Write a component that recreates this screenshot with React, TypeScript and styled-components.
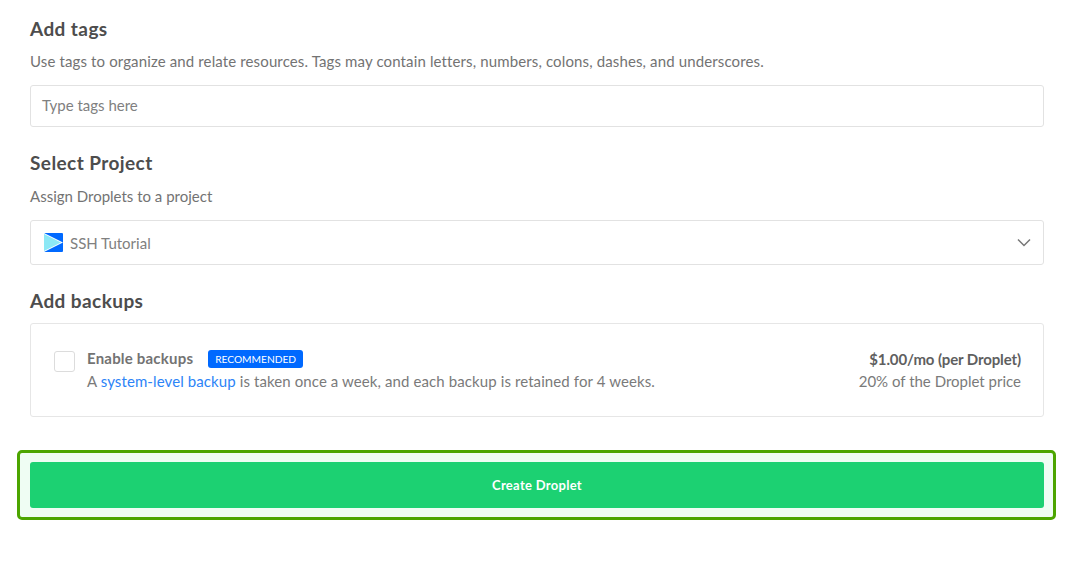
import styled, { createGlobalStyle } from "styled-components";

const GlobalStyle = createGlobalStyle`
  html, body {
    margin: 0;
    padding: 0;
    background: #fff;
    font-family: "Lato", "Liberation Sans", sans-serif;
  }
`;

const Page = styled.div`
  width: 1080px;
  height: 564px;
  overflow: hidden;
  box-sizing: border-box;
  padding: 17px 36px 0 30px;
`;

const Title = styled.h2`
  margin: 0;
  font-size: 19px;
  line-height: 24px;
  font-weight: 700;
  letter-spacing: 0.42px;
  color: #4d4d4d;
`;

const Hint = styled.p`
  margin: 10px 0 0;
  font-size: 15px;
  line-height: 20px;
  letter-spacing: 0.13px;
  color: #737373;
`;

const ProjectHint = styled(Hint)`
  margin-top: 11px;
  letter-spacing: 0;
`;

const Field = styled.div<{ $height: number }>`
  box-sizing: border-box;
  height: ${(p) => p.$height}px;
  margin: 14px 0 24px;
  padding: 0 12px 0 13px;
  display: flex;
  align-items: center;
  gap: 7px;
  border: 1px solid #e2e2e2;
  border-radius: 3px;
  font-size: 15px;
  color: #808080;
`;

const TagsField = styled(Field)`
  padding: 0 12px 2px 11px;
`;

const Grow = styled.span`
  flex: 1;
`;

const BackupCard = styled.div`
  box-sizing: border-box;
  height: 94px;
  margin-top: 10px;
  padding: 0 22px 0 23px;
  display: flex;
  align-items: center;
  border: 1px solid #e6e6e6;
  border-radius: 3px;
`;

const Check = styled.div`
  box-sizing: border-box;
  align-self: flex-start;
  width: 21px;
  height: 21px;
  margin: 27px 12px 0 0;
  border: 1px solid #dcdcdc;
  border-radius: 3px;
`;

const Info = styled.div`
  flex: 1;
`;

const Row = styled.div`
  display: flex;
  align-items: center;
  height: 22px;
  margin: -1px 0 1px;
  font-size: 15px;
  color: #737373;
`;

const Strong = styled.span`
  font-weight: 700;
  letter-spacing: 0.2px;
`;

const Badge = styled.span`
  margin: 2px 0 0 15px;
  padding: 0 7px;
  height: 18px;
  line-height: 18px;
  border-radius: 3px;
  background: #0069ff;
  color: #fff;
  font-size: 10.2px;
`;

const Line = styled.div`
  font-size: 15px;
  line-height: 22px;
  letter-spacing: 0.1px;
  color: #7a7a7a;
`;

const Anchor = styled.a`
  color: #2c84f7;
`;

const Price = styled.div`
  text-align: right;
  font-size: 15px;
  line-height: 22px;
  color: #7a7a7a;
`;

const Amount = styled.div`
  font-weight: 700;
  letter-spacing: -0.12px;
  color: #5f5f5f;
`;

const Highlight = styled.div`
  box-sizing: border-box;
  width: 1039px;
  height: 70px;
  margin: 33px 0 0 -13px;
  padding: 9px 10px;
  border: 3px solid #4ca500;
  border-radius: 5px;
  background: #effdf3;
`;

const CreateButton = styled.button`
  display: block;
  width: 1014px;
  height: 46px;
  border: 0;
  border-radius: 3px;
  background: #1cd172;
  color: #fff;
  font-family: inherit;
  font-size: 13px;
  font-weight: 700;
  letter-spacing: 0.3px;
`;

const ProjectIcon = () => (
  <svg width="19" height="19" viewBox="0 0 19 19">
    <rect width="19" height="19" rx="1" fill="#0069ff" />
    <path d="M0 0 L19 9.5 L0 19 Z" fill="#fff" />
    <path d="M0 1 L17 9.5 L0 18 Z" fill="#8ce8f5" />
  </svg>
);

const Chevron = () => (
  <svg width="14" height="9" viewBox="0 0 14 9" fill="none" stroke="#777" strokeWidth="1.5">
    <path d="M1 1.5 L7 7.5 L13 1.5" />
  </svg>
);

export default function App() {
  return (
    <Page>
      <GlobalStyle />
      <Title>Add tags</Title>
      <Hint>Use tags to organize and relate resources. Tags may contain letters, numbers, colons, dashes, and underscores.</Hint>
      <TagsField $height={42}>Type tags here</TagsField>

      <Title>Select Project</Title>
      <ProjectHint>Assign Droplets to a project</ProjectHint>
      <Field $height={45}>
        <ProjectIcon />
        <Grow>SSH Tutorial</Grow>
        <Chevron />
      </Field>

      <Title>Add backups</Title>
      <BackupCard>
        <Check />
        <Info>
          <Row>
            <Strong>Enable backups</Strong>
            <Badge>RECOMMENDED</Badge>
          </Row>
          <Line>
            A <Anchor>system-level backup</Anchor> is taken once a week, and each backup is retained for 4 weeks.
          </Line>
        </Info>
        <Price>
          <Amount>$1.00/mo (per Droplet)</Amount>
          20% of the Droplet price
        </Price>
      </BackupCard>

      <Highlight>
        <CreateButton>Create Droplet</CreateButton>
      </Highlight>
    </Page>
  );
}
